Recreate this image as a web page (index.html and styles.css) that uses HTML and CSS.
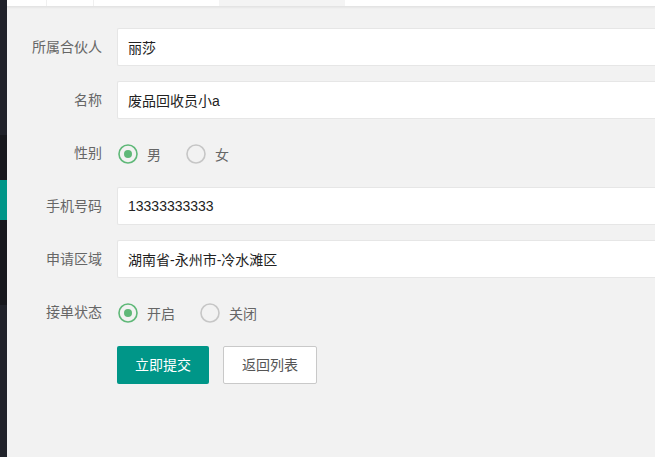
FILE: index.html
```html
<!DOCTYPE html>
<html lang="zh-CN">
<head>
<meta charset="utf-8">
<title>编辑回收员</title>
<link rel="stylesheet" href="styles.css">
</head>
<body>
<div class="app">
  <aside class="side">
    <div class="side-top"></div>
    <div class="side-sub">
      <div class="side-gap"></div>
      <div class="side-active"></div>
    </div>
  </aside>
  <main class="main">
    <div class="tabs">
      <div class="tab tab-a"></div>
      <div class="tab tab-b"></div>
      <div class="tab tab-c"></div>
      <div class="tab tab-on"></div>
    </div>
    <form class="form">
      <div class="item">
        <label class="label">所属合伙人</label>
        <div class="block"><input class="input" type="text" value="丽莎"></div>
      </div>
      <div class="item">
        <label class="label">名称</label>
        <div class="block"><input class="input" type="text" value="废品回收员小a"></div>
      </div>
      <div class="item">
        <label class="label">性别</label>
        <div class="block radios">
          <span class="radio on"><svg class="ico" viewBox="0 0 22 22"><circle cx="11" cy="11" r="9" fill="none" stroke="#5FB878" stroke-width="1.6"/><circle cx="11" cy="11" r="4" fill="#5FB878"/></svg><span>男</span></span>
          <span class="radio"><svg class="ico" viewBox="0 0 22 22"><circle cx="11" cy="11" r="9" fill="none" stroke="#c6c6c6" stroke-width="1.6"/></svg><span>女</span></span>
        </div>
      </div>
      <div class="item">
        <label class="label">手机号码</label>
        <div class="block"><input class="input" type="text" value="13333333333"></div>
      </div>
      <div class="item">
        <label class="label">申请区域</label>
        <div class="block"><input class="input" type="text" value="湖南省-永州市-冷水滩区"></div>
      </div>
      <div class="item">
        <label class="label">接单状态</label>
        <div class="block radios">
          <span class="radio on"><svg class="ico" viewBox="0 0 22 22"><circle cx="11" cy="11" r="9" fill="none" stroke="#5FB878" stroke-width="1.6"/><circle cx="11" cy="11" r="4" fill="#5FB878"/></svg><span>开启</span></span>
          <span class="radio"><svg class="ico" viewBox="0 0 22 22"><circle cx="11" cy="11" r="9" fill="none" stroke="#c6c6c6" stroke-width="1.6"/></svg><span>关闭</span></span>
        </div>
      </div>
      <div class="item">
        <div class="block btns">
          <button class="btn btn-main" type="button">立即提交</button>
          <button class="btn btn-plain" type="button">返回列表</button>
        </div>
      </div>
    </form>
  </main>
</div>
</body>
</html>
```
FILE: styles.css
```css
html, body {
  margin: 0;
  padding: 0;
  width: 655px;
  height: 457px;
  overflow: hidden;
  background: #f2f2f2;
  font-family: "Liberation Sans", "Noto Sans CJK SC", sans-serif;
  font-size: 14px;
  color: #666;
}
.app {
  display: flex;
  height: 457px;
}
.side {
  width: 7px;
  flex: none;
  background: #20222a;
  display: flex;
  flex-direction: column;
}
.side-top {
  height: 135px;
}
.side-sub {
  height: 170px;
  background: #17181d;
  display: flex;
  flex-direction: column;
}
.side-gap {
  height: 45px;
}
.side-active {
  height: 40px;
  background: #009688;
}
.main {
  flex: 1;
  min-width: 0;
  overflow: hidden;
  display: flex;
  flex-direction: column;
}
.tabs {
  height: 6px;
  background: #fff;
  border-bottom: 1px solid #e4e4e4;
  box-shadow: 0 1px 2px rgba(0,0,0,.05);
  display: flex;
}
.tab {
  border-right: 1px solid #f0f0f0;
}
.tab-a { width: 39px; }
.tab-b { width: 46px; }
.tab-c { width: 125px; border-right: none; }
.tab-on {
  width: 126px;
  background: #f4f4f4;
  border-right: none;
}
.form {
  padding-top: 21px;
  display: flex;
  flex-direction: column;
  gap: 15px;
}
.item {
  display: flex;
  height: 38px;
}
.label {
  width: 80px;
  padding: 9px 15px;
  line-height: 20px;
  text-align: right;
  color: #666;
  flex: none;
}
.block {
  flex: 1;
  min-width: 0;
}
.item .btns {
  margin-left: 110px;
}
.input {
  box-sizing: border-box;
  display: block;
  width: 100%;
  height: 38px;
  margin: 0;
  border: 1px solid #e6e6e6;
  border-right: none;
  border-radius: 2px 0 0 2px;
  background: #fff;
  padding: 0 10px;
  font-family: "Liberation Sans", "Noto Sans CJK SC", sans-serif;
  font-size: 14px;
  color: #222;
  outline: none;
}
.radios {
  display: flex;
  gap: 24px;
  padding-top: 6px;
}
.radio {
  display: flex;
  align-items: center;
  height: 28px;
  gap: 8px;
  color: #666;
}
.ico {
  width: 22px;
  height: 22px;
  display: block;
}
.btns {
  display: flex;
  gap: 14px;
}
.btn {
  height: 38px;
  margin: 0;
  padding: 0 18px;
  border-radius: 2px;
  font-family: "Liberation Sans", "Noto Sans CJK SC", sans-serif;
  font-size: 14px;
  line-height: 36px;
  cursor: pointer;
}
.btn-main {
  background: #009688;
  color: #fff;
  border: none;
}
.btn-plain {
  background: #fff;
  color: #555;
  border: 1px solid #c9c9c9;
}
```
